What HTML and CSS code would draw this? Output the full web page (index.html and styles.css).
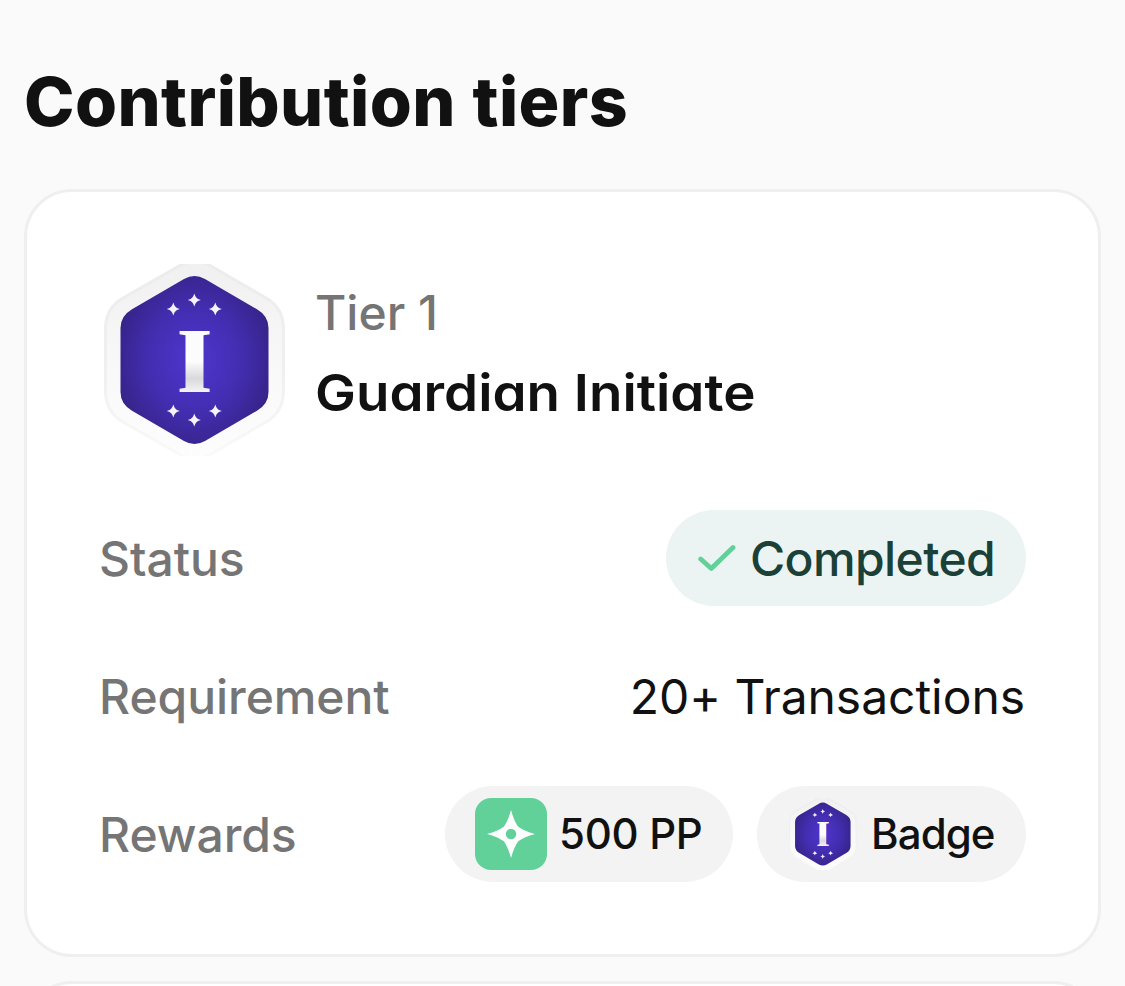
FILE: index.html
```html
<!DOCTYPE html>
<html lang="en">
<head>
  <meta charset="UTF-8">
  <title>Contribution tiers</title>
  <link rel="stylesheet" href="styles.css">
</head>
<body>
  <div class="container">
    <h1>Contribution tiers</h1>

    <div class="card">
      <div class="card-head">
        <svg class="badge-lg" viewBox="0 0 192 192">
          <defs>
            <radialGradient id="hexFill" cx="0.5" cy="0.5" r="0.6">
              <stop offset="0" stop-color="#4f35cf"/>
              <stop offset="0.5" stop-color="#432eb2"/>
              <stop offset="1" stop-color="#34217f"/>
            </radialGradient>
            <linearGradient id="ringFill" x1="0" y1="0" x2="0" y2="1">
              <stop offset="0" stop-color="#f0f0f1"/>
              <stop offset="0.5" stop-color="#f8f8f9"/>
              <stop offset="1" stop-color="#fdfdfd"/>
            </linearGradient>
            <linearGradient id="ringEdge" x1="0" y1="0" x2="0" y2="1">
              <stop offset="0" stop-color="#ececed"/>
              <stop offset="0.6" stop-color="#f0f0f1"/>
              <stop offset="1" stop-color="#fafafa"/>
            </linearGradient>
            <linearGradient id="numeralFill" gradientUnits="userSpaceOnUse" x1="0" y1="67" x2="0" y2="128">
              <stop offset="0.5" stop-color="#fcfcfc"/>
              <stop offset="0.78" stop-color="#d9d8dd"/>
              <stop offset="1" stop-color="#f4f4f6"/>
            </linearGradient>
            <path id="spark" d="M0 -6.500 Q1 -3 2.200 -2.200 Q3 -1 6.500 0 Q3 1 2.200 2.200 Q1 3 0 6.500 Q-1 3 -2.200 2.200 Q-3 1 -6.500 0 Q-3 -1 -2.200 -2.200 Q-1 -3 0 -6.500Z"/>
          </defs>
          <g id="badge">
            <path fill="url(#ringFill)" stroke="url(#ringEdge)" stroke-width="3" d="M6.500 65 Q6.500 44 24 34 L80 2 Q96 -7 112 2 L167 34 Q184.500 44 184.500 65 V127 Q184.500 148 167 158 L112 190 Q96 199 80 190 L24 158 Q6.500 148 6.500 127Z"/>
            <path fill="url(#hexFill)" d="M21.500 64 Q21.500 52 33 45.300 L85 15 Q95.500 9 106 15 L158 45.300 Q169.500 52 169.500 64 V128 Q169.500 140 158 146.700 L106 177 Q95.500 183 85 177 L33 146.700 Q21.500 140 21.500 128Z"/>
            <g fill="#f6f2fc">
              <use href="#spark" x="74.300" y="45"/>
              <use href="#spark" x="95.300" y="36"/>
              <use href="#spark" x="116.300" y="45"/>
              <use href="#spark" x="74.300" y="147"/>
              <use href="#spark" x="95.300" y="156"/>
              <use href="#spark" x="116.300" y="147"/>
            </g>
            <g fill="url(#numeralFill)">
              <rect x="86.500" y="69" width="18" height="57"/>
              <text class="numeral" x="95.500" y="128" text-anchor="middle">I</text>
            </g>
          </g>
        </svg>
        <div class="card-title">
          <div class="tier">Tier 1</div>
          <h2>Guardian Initiate</h2>
        </div>
      </div>

      <div class="row">
        <span class="label">Status</span>
        <span class="pill completed">
          <svg class="check" viewBox="0 0 40 32"><path d="M4.700 17 L15.300 26.500 L37 5.500"/></svg>
          <span>Completed</span>
        </span>
      </div>
      <div class="row">
        <span class="label">Requirement</span>
        <span class="value">20+ Transactions</span>
      </div>
      <div class="row">
        <span class="label">Rewards</span>
        <div class="pills">
          <span class="pill points">
            <svg class="pp" viewBox="0 0 72 72">
              <rect width="72" height="72" rx="16" fill="#61d199"/>
              <path fill="#fff" d="M36 12 Q39 23 43.200 28.800 Q49 33 60 36 Q49 39 43.200 43.200 Q39 49 36 60 Q33 49 28.800 43.200 Q23 39 12 36 Q23 33 28.800 28.800 Q33 23 36 12Z"/>
              <circle cx="36" cy="36" r="5.200" fill="#61d199"/>
            </svg>
            <span>500 PP</span>
          </span>
          <span class="pill badge">
            <svg class="badge-sm" viewBox="0 0 192 192"><use href="#badge"/></svg>
            <span>Badge</span>
          </span>
        </div>
      </div>
    </div>

    <div class="card"></div>
  </div>
</body>
</html>
```
FILE: styles.css
```css
* {
  box-sizing: border-box;
}
body {
  font-family: Inter, "Liberation Sans", sans-serif;
  background-color: #fafafa;
  color: #111;
  margin: 0;
  height: 986px;
  overflow: hidden;
}
.container {
  height: 986px;
  padding: 59px 24px 0;
  overflow: hidden;
}
h1,
h2 {
  margin: 0;
  white-space: nowrap;
  font-feature-settings: "cv11";
}
h1 {
  font-size: 68px;
  line-height: 84px;
  font-weight: 800;
  letter-spacing: 0.4px;
  word-spacing: 1.5px;
  margin-bottom: 46px;
}
.card {
  background-color: #fff;
  border: 3px solid #efefef;
  border-radius: 48px;
  padding: 72px;
  margin-bottom: 24px;
}
.card-head {
  display: flex;
  align-items: center;
  gap: 24px;
  margin-bottom: 54px;
}
.card-title {
  padding-bottom: 14px;
}
.badge-lg {
  width: 192px;
  height: 192px;
}
.numeral {
  font-family: "Liberation Serif", serif;
  font-size: 93px;
  font-weight: 700;
}
.tier {
  font-size: 48px;
  line-height: 72px;
  font-weight: 500;
  color: #757575;
}
h2 {
  font-size: 51px;
  line-height: 72px;
  font-weight: 600;
  margin-top: 8px;
  transform: scaleX(1.072);
  transform-origin: left;
}
.row {
  display: flex;
  justify-content: space-between;
  align-items: center;
  height: 96px;
  font-size: 48px;
}
.row + .row {
  margin-top: 42px;
}
.label {
  font-weight: 500;
  letter-spacing: -0.05px;
  color: #757575;
}
.value {
  letter-spacing: -0.05px;
  margin-right: 1px;
}
.pills {
  display: flex;
  gap: 24px;
}
.pill {
  display: flex;
  align-items: center;
  height: 96px;
  border-radius: 48px;
  background-color: #f3f3f3;
  font-size: 42px;
  font-weight: 500;
  padding: 0 30px;
  gap: 12px;
  white-space: nowrap;
}
.pill.completed {
  width: 360px;
  background-color: #ebf4f3;
  color: #1b4038;
  font-size: 48px;
  letter-spacing: -0.6px;
  gap: 14px;
}
.pill.points {
  width: 288px;
  letter-spacing: -0.3px;
}
.pill.badge {
  width: 269px;
  letter-spacing: -0.9px;
}
.pill.points span,
.pill.badge span {
  padding-bottom: 2px;
}
.check {
  width: 40px;
  height: 32px;
  flex: none;
}
.check path {
  fill: none;
  stroke: #61d199;
  stroke-width: 4.8;
  stroke-linecap: round;
  stroke-linejoin: round;
}
.pp,
.badge-sm {
  width: 72px;
  height: 72px;
  flex: none;
}
```
